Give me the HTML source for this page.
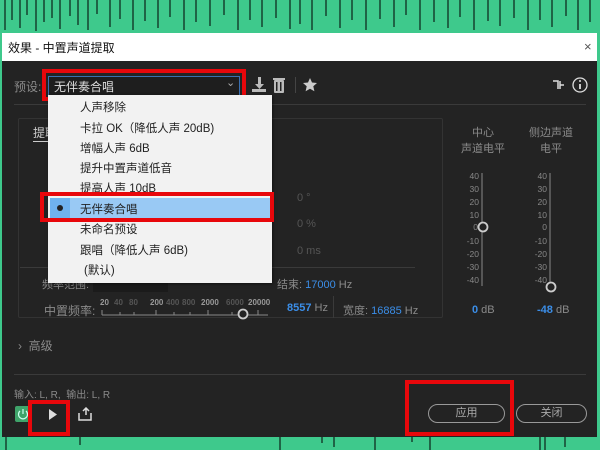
<!DOCTYPE html>
<html><head><meta charset="utf-8"><style>
*{margin:0;padding:0;box-sizing:border-box}
body{width:600px;height:450px;overflow:hidden;background:#3ec98c;font-family:"Liberation Sans","Noto Sans CJK SC",sans-serif;position:relative}
.a{position:absolute;white-space:nowrap}
.g{color:#8a8a8a;font-size:11px}
.b{color:#3b8ee8}
.red{position:absolute;border:4px solid #e8070b}
.mi{position:absolute;left:80px;font-size:11.5px;color:#222}
.sc{position:absolute;font-size:9px;color:#8a8a8a;text-align:right;width:20px}
</style></head><body>
<svg class="a" style="left:0;top:0" width="600" height="33"><g stroke="#000" stroke-width="1">
<path d="M5 0V30M12 0V20M20 0V28M27 0V15M36 0V31M44 0V22M52 0V18M60 0V29M70 0V16M78 0V25M88 0V30M97 0V14M110 0V27M120 0V19M133 0V30M145 0V21M158 0V28M170 0V17M184 0V30M196 0V22M210 0V26M224 0V15M238 0V30M250 0V20M262 0V27M276 0V18M290 0V29M300 0V24M312 0V30M326 0V16M340 0V28M352 0V20M366 0V30M380 0V19M394 0V27M406 0V15M420 0V30M434 0V22M448 0V28M460 0V17M474 0V30M488 0V21M500 0V26M514 0V18M528 0V30M540 0V20M552 0V27M566 0V16M578 0V30M590 0V22"/></g></svg>
<div class="a" style="left:2px;top:33px;width:595px;height:28px;background:#fff"></div>
<div class="a" style="left:8px;top:39px;font-size:12px;color:#111">效果 - 中置声道提取</div>
<div class="a" style="left:584px;top:39px;font-size:13px;color:#555">×</div>
<div class="a" style="left:2px;top:61px;width:595px;height:376px;background:#232323"></div>
<svg class="a" style="left:0;top:437px" width="600" height="13"><path stroke="#000" d="M6 0V13M80 0V8M280 0V13M322 0V6M334 0V10M375 0V13M412 0V5M430 0V13M540 0V13M545 0V13M565 0V10" /></svg>
<div class="a g" style="left:14px;top:78px;font-size:12px">预设:</div>
<div class="a" style="left:48px;top:76px;width:192px;height:20px;border:1px solid #3a6fb0;background:#1e1e1e"></div>
<div class="a" style="left:54px;top:78px;font-size:12px;color:#ddd">无伴奏合唱</div>
<div class="a" style="left:226px;top:76px;font-size:11px;color:#aaa">⌄</div>
<div class="red" style="left:42px;top:69px;width:204px;height:32px"></div>
<svg class="a" style="left:250px;top:76px" width="70" height="18"><g fill="#bbb"><path d="M8 1h3v7h3l-4.5 5-4.5-5h3z"/><rect x="2" y="13" width="14" height="3"/><rect x="24" y="4" width="10" height="13" rx="1"/><rect x="23" y="2" width="12" height="2"/></g><rect x="26" y="6" width="1.5" height="9" fill="#232323"/><rect x="30" y="6" width="1.5" height="9" fill="#232323"/><rect x="45" y="1" width="1" height="16" fill="#444"/><path fill="#ccc" d="M60 2l2 4.5 5 .5-3.7 3.3 1.1 5-4.4-2.6-4.4 2.6 1.1-5L53 7l5-.5z"/></svg>
<svg class="a" style="left:550px;top:76px" width="40" height="18"><path fill="none" stroke="#ddd" stroke-width="1.5" d="M3 5h5v8M10 5v8M10 9h4"/><circle cx="30" cy="9" r="7" fill="none" stroke="#ddd" stroke-width="1.3"/><path stroke="#ddd" stroke-width="1.8" d="M30 8v5"/><circle cx="30" cy="5" r="1" fill="#ddd"/></svg>
<div class="a" style="left:14px;top:104px;width:572px;height:1px;background:#3a3a3a"></div>
<div class="a" style="left:18px;top:118px;width:425px;height:200px;border:1px solid #333;border-radius:2px"></div>
<div class="a g" style="left:33px;top:124px;font-size:12px;color:#ccc;border-bottom:1px solid #ccc">提取</div>
<div class="a" style="left:297px;top:192px;font-size:11px;color:#555">0 °</div>
<div class="a" style="left:297px;top:218px;font-size:11px;color:#555">0 %</div>
<div class="a" style="left:297px;top:245px;font-size:11px;color:#555">0 ms</div>
<div class="a" style="left:20px;top:267px;width:395px;height:1px;background:#3a3a3a"></div>
<div class="a g" style="left:42px;top:276px">频率范围:</div>
<div class="a" style="left:93px;top:274px;width:75px;height:18px;background:#1b1b1b"></div>
<div class="a g" style="left:277px;top:276px">结束: <span class="b">17000</span> Hz</div>
<div class="a g" style="left:44px;top:302px;font-size:12px">中置频率:</div>
<svg class="a" style="left:98px;top:296px" width="180" height="24"><g font-size="8" font-family="Liberation Sans" font-weight="bold"><text x="2" y="9" fill="#999">20</text><text x="16" y="9" fill="#555">40</text><text x="31" y="9" fill="#555">80</text><text x="52" y="9" fill="#999">200</text><text x="68" y="9" fill="#555">400</text><text x="84" y="9" fill="#555">800</text><text x="103" y="9" fill="#999">2000</text><text x="128" y="9" fill="#555">6000</text><text x="150" y="9" fill="#999">20000</text></g><path stroke="#888" d="M4 19h166M4 14v5M22 16v3M36 16v3M58 14v5M76 16v3M92 16v3M110 14v5M134 16v3M160 14v5"/><circle cx="145" cy="18" r="4.5" fill="#232323" stroke="#ccc" stroke-width="1.8"/></svg>
<div class="a g" style="left:287px;top:302px"><span class="b" style="font-weight:bold">8557</span> Hz</div>
<div class="a" style="left:333px;top:296px;width:1px;height:22px;background:#3a3a3a"></div>
<div class="a g" style="left:343px;top:302px">宽度: <span class="b">16885</span> Hz</div>
<div class="a g" style="left:461px;top:124px;width:44px;text-align:center">中心<br>声道电平</div>
<div class="a g" style="left:527px;top:124px;width:48px;text-align:center">侧边声道<br>电平</div>
<svg class="a" style="left:460px;top:170px" width="110" height="125"><path stroke="#888" d="M22 3v113M90 3v113"/><g font-size="8.5" fill="#888" font-family="Liberation Sans" text-anchor="end"><text x="19" y="9">40</text><text x="19" y="22">30</text><text x="19" y="35">20</text><text x="19" y="48">10</text><text x="18" y="60">0</text><text x="19" y="74">-10</text><text x="19" y="87">-20</text><text x="19" y="100">-30</text><text x="19" y="113">-40</text><text x="87" y="9">40</text><text x="87" y="22">30</text><text x="87" y="35">20</text><text x="87" y="48">10</text><text x="87" y="60">0</text><text x="87" y="74">-10</text><text x="87" y="87">-20</text><text x="87" y="100">-30</text><text x="87" y="113">-40</text></g><circle cx="23" cy="57" r="4.5" fill="#232323" stroke="#ccc" stroke-width="1.8"/><circle cx="91" cy="117" r="4.5" fill="#232323" stroke="#ccc" stroke-width="1.8"/></svg>
<div class="a g" style="left:472px;top:304px"><span class="b" style="font-weight:bold">0</span> dB</div>
<div class="a g" style="left:537px;top:304px"><span class="b" style="font-weight:bold">-48</span> dB</div>
<div class="a g" style="left:18px;top:337px;font-size:12px">› &nbsp;高级</div>
<div class="a" style="left:14px;top:374px;width:572px;height:1px;background:#3a3a3a"></div>
<div class="a g" style="left:14px;top:386px;font-size:10px">输入: L, R, &nbsp;输出: L, R</div>
<div class="a" style="left:15px;top:406px;width:16px;height:16px;background:#3fa36a;border-radius:2px"></div>
<svg class="a" style="left:15px;top:406px" width="16" height="16"><path d="M5 5a4.5 4.5 0 1 0 6 0M8 3v5" fill="none" stroke="#cfe" stroke-width="1.2"/></svg>
<svg class="a" style="left:45px;top:407px" width="50" height="15"><path fill="#ddd" d="M4 2l8 5.5-8 5.5z"/><path fill="none" stroke="#ddd" stroke-width="1.5" d="M34 6v7h12V6M38 4l3-3 3 3M41 1v7"/></svg>
<div class="red" style="left:28px;top:400px;width:42px;height:36px"></div>
<div class="a" style="left:428px;top:404px;width:77px;height:19px;border:1px solid #999;border-radius:10px;color:#aaa;font-size:11px;text-align:center;line-height:17px">应用</div>
<div class="a" style="left:516px;top:404px;width:71px;height:19px;border:1px solid #999;border-radius:10px;color:#aaa;font-size:11px;text-align:center;line-height:17px">关闭</div>
<div class="red" style="left:405px;top:380px;width:109px;height:56px"></div>
<div class="a" style="left:48px;top:95px;width:224px;height:188px;background:#f2f2f2;box-shadow:1px 1px 3px rgba(0,0,0,.5)"></div>
<div class="a" style="left:50px;top:198px;width:220px;height:21px;background:#99c9f4"></div>
<div class="a" style="left:50px;top:198px;width:20px;height:21px;background:#6fb2ee"></div>
<div class="a" style="left:57px;top:205px;width:6px;height:6px;border-radius:50%;background:#222"></div>
<div class="mi" style="top:99px">人声移除</div>
<div class="mi" style="top:120px">卡拉 OK（降低人声 20dB)</div>
<div class="mi" style="top:140px">增幅人声 6dB</div>
<div class="mi" style="top:160px">提升中置声道低音</div>
<div class="mi" style="top:180px">提高人声 10dB</div>
<div class="mi" style="top:201px">无伴奏合唱</div>
<div class="mi" style="top:221px">未命名预设</div>
<div class="mi" style="top:242px">跟唱（降低人声 6dB)</div>
<div class="mi" style="top:262px;left:84px">(默认)</div>
<div class="red" style="left:40px;top:192px;width:234px;height:30px"></div>
</body></html>
